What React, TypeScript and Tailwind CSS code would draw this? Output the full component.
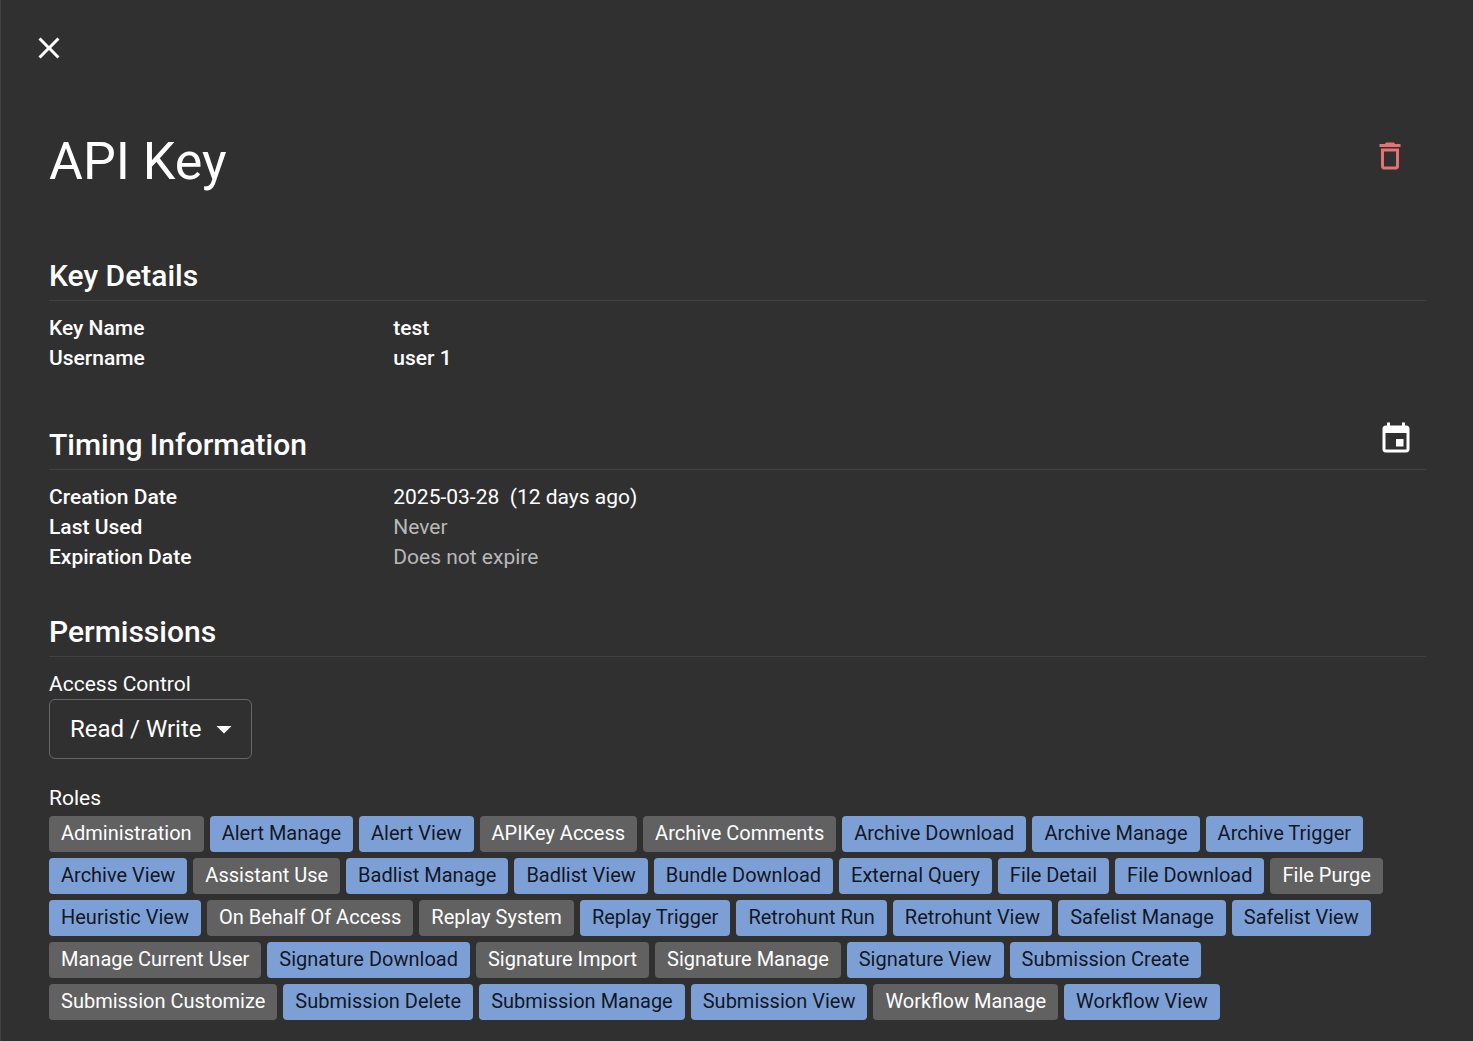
import React, { useState } from "react";

type Role = { name: string; active: boolean };

const on = (name: string): Role => ({ name, active: true });
const off = (name: string): Role => ({ name, active: false });

const INITIAL_ROLES: Role[] = [
  off("Administration"),
  on("Alert Manage"),
  on("Alert View"),
  off("APIKey Access"),
  off("Archive Comments"),
  on("Archive Download"),
  on("Archive Manage"),
  on("Archive Trigger"),
  on("Archive View"),
  off("Assistant Use"),
  on("Badlist Manage"),
  on("Badlist View"),
  on("Bundle Download"),
  on("External Query"),
  on("File Detail"),
  on("File Download"),
  off("File Purge"),
  on("Heuristic View"),
  off("On Behalf Of Access"),
  off("Replay System"),
  on("Replay Trigger"),
  on("Retrohunt Run"),
  on("Retrohunt View"),
  on("Safelist Manage"),
  on("Safelist View"),
  off("Manage Current User"),
  on("Signature Download"),
  off("Signature Import"),
  off("Signature Manage"),
  on("Signature View"),
  on("Submission Create"),
  off("Submission Customize"),
  on("Submission Delete"),
  on("Submission Manage"),
  on("Submission View"),
  off("Workflow Manage"),
  on("Workflow View"),
];

const ICONS = {
  close:
    "M19 6.41 17.59 5 12 10.59 6.41 5 5 6.41 10.59 12 5 17.59 6.41 19 12 13.41 17.59 19 19 17.59 13.41 12z",
  trash:
    "M6 19c0 1.1.9 2 2 2h8c1.1 0 2-.9 2-2V7H6v12zM8 9h8v10H8V9zm7.5-5-1-1h-5l-1 1H5v2h14V4z",
  event:
    "M17 12h-5v5h5v-5zM16 1v2H8V1H6v2H5c-1.11 0-1.99.9-1.99 2L3 19c0 1.1.89 2 2 2h14c1.1 0 2-.9 2-2V5c0-1.1-.9-2-2-2h-1V1h-2zm3 18H5V8h14v11z",
  caret: "m7 10 5 5 5-5z",
};

function Icon({ path }: { path: string }) {
  return (
    <svg viewBox="0 0 24 24" className="size-9 fill-current" aria-hidden="true">
      <path d={path} />
    </svg>
  );
}

function IconButton({ label, path, className = "" }: { label: string; path: string; className?: string }) {
  return (
    <button
      type="button"
      aria-label={label}
      className={`flex size-15 shrink-0 items-center justify-center rounded-full hover:bg-white/10 ${className}`}
    >
      <Icon path={path} />
    </button>
  );
}

function Section({
  title,
  action,
  children,
}: {
  title: string;
  action?: React.ReactNode;
  children: React.ReactNode;
}) {
  return (
    <section className="mt-9">
      <div className="flex items-end justify-between border-b border-[#424242]">
        <h2 className="text-[30px] leading-12 font-medium">{title}</h2>
        {action}
      </div>
      <div className="pt-3">{children}</div>
    </section>
  );
}

function Detail({ label, children, className = "" }: { label: string; children: React.ReactNode; className?: string }) {
  return (
    <div className="flex">
      <dt className="w-1/4 font-medium">{label}</dt>
      <dd className={className}>{children}</dd>
    </div>
  );
}

export default function App() {
  const [roles, setRoles] = useState(INITIAL_ROLES);

  const toggle = (name: string) =>
    setRoles((list) => list.map((r) => (r.name === name ? { ...r, active: !r.active } : r)));

  return (
    <main className="min-h-screen border-l border-[#424242] bg-[#303030] pb-5 font-[Roboto,sans-serif] text-[21px] leading-[30px] text-white">
      <div className="px-[18px] pt-[18px]">
        <IconButton label="Close" path={ICONS.close} />
      </div>

      <div className="pt-12 pr-[47px] pl-12">
        <header className="flex items-start justify-between pr-1.5">
          <h1 className="pt-1 text-[52px] leading-[64px]">API Key</h1>
          <IconButton label="Delete API key" path={ICONS.trash} className="text-[#e57373]" />
        </header>

        <div className="pt-[22px]">
          <Section title="Key Details">
            <dl>
              <Detail label="Key Name" className="font-medium">
                test
              </Detail>
              <Detail label="Username" className="font-medium">
                user 1
              </Detail>
            </dl>
          </Section>

          <Section title="Timing Information" action={<IconButton label="Set expiration date" path={ICONS.event} />}>
            <dl>
              <Detail label="Creation Date">2025-03-28&nbsp; (12 days ago)</Detail>
              <Detail label="Last Used" className="text-[#b8b8b8]">
                Never
              </Detail>
              <Detail label="Expiration Date" className="text-[#b8b8b8]">
                Does not expire
              </Detail>
            </dl>
          </Section>

          <Section title="Permissions">
            <label htmlFor="access-control" className="block">
              Access Control
            </label>
            <div className="relative w-fit">
              <select
                id="access-control"
                defaultValue="rw"
                className="h-15 appearance-none rounded-md border border-[#666666] bg-[#303030] pr-[49px] pl-5 text-2xl"
              >
                <option value="rw">Read / Write</option>
                <option value="r">Read</option>
                <option value="w">Write</option>
              </select>
              <span className="pointer-events-none absolute inset-y-0 right-2.5 flex items-center">
                <Icon path={ICONS.caret} />
              </span>
            </div>

            <h3 className="mt-6">Roles</h3>
            <div className="flex flex-wrap gap-1.5 pt-[3px]">
              {roles.map((role) => (
                <button
                  key={role.name}
                  type="button"
                  aria-pressed={role.active}
                  onClick={() => toggle(role.name)}
                  className={`flex h-9 items-center rounded px-3 pb-0.5 text-xl ${
                    role.active ? "bg-[#7c9fd6] text-black/87" : "bg-[#616161] text-white"
                  }`}
                >
                  {role.name}
                </button>
              ))}
            </div>
          </Section>
        </div>
      </div>
    </main>
  );
}
